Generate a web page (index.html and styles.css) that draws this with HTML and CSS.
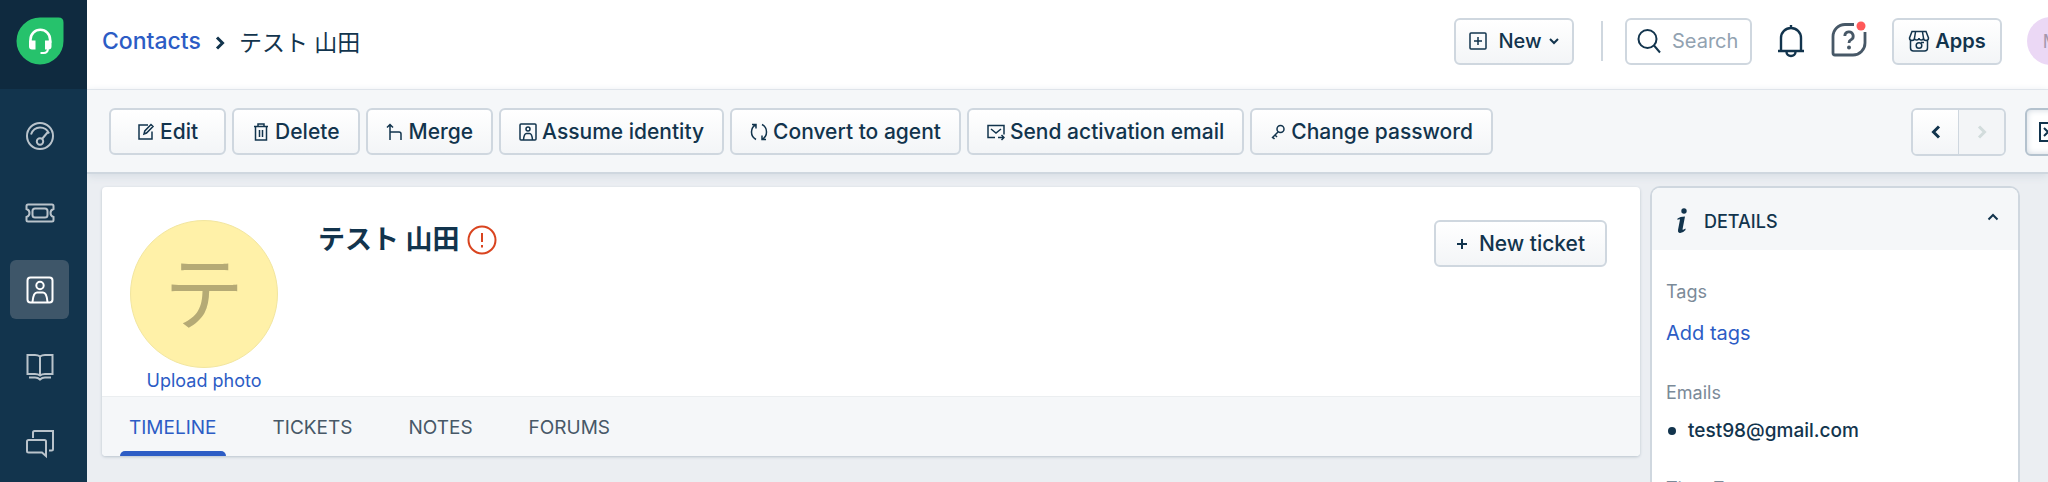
FILE: index.html
```html
<!DOCTYPE html>
<html lang="ja">
<head>
<meta charset="utf-8">
<title>Contacts</title>
<link rel="stylesheet" href="styles.css">
</head>
<body>
<div class="app">
  <nav class="sidebar" aria-label="Main">
    <a class="brand" href="#" aria-label="Home">
      <svg width="48" height="48" viewBox="0 0 48 48"><path d="M24 0.500H42.500Q47.500 0.500 47.500 5.500V24A23.500 23.500 0 1 1 24 0.500Z" fill="#26c26c"/><path d="M14.500 26V22.500a9.800 9.800 0 0 1 19.600 0V26" fill="none" stroke="#fff" stroke-width="2.600"/><path d="M13 23.500h6.500v9H16a3 3 0 0 1-3-3zM29 23.500h6.500v6a3 3 0 0 1-3 3H29z" fill="#fff"/><path d="M32 31q0 5-4.500 5H24.500" fill="none" stroke="#fff" stroke-width="2"/></svg>
    </a>
    <ul class="nav">
      <li><a class="nav-item" href="#" aria-label="Dashboard"><svg width="30" height="30" viewBox="0 0 30 30"><circle cx="15" cy="15" r="13"/><circle cx="15" cy="20.500" r="3.200"/><path d="M17 18l5.500-6.500M6 13.500q2.500-7 9-7t9 6"/></svg></a></li>
      <li><a class="nav-item" href="#" aria-label="Tickets"><svg width="30" height="30" viewBox="0 0 30 30"><path d="M3 6.500h24q1.500 0 1.500 1.500v3q-3 1-3 4t3 4v3q0 1.500-1.500 1.500H3q-1.500 0-1.500-1.500v-3q3-1 3-4t-3-4v-3q0-1.500 1.500-1.500z"/><rect x="7.500" y="10.500" width="15" height="9" rx="2.500"/></svg></a></li>
      <li><a class="nav-item active" href="#" aria-label="Contacts"><svg width="30" height="30" viewBox="0 0 30 30"><rect x="2.500" y="2.500" width="25" height="25" rx="3"/><circle cx="15" cy="10.500" r="3.700"/><path d="M7.500 27q.8-9.500 4.500-9.500h6q3.700 0 4.500 9.500"/></svg></a></li>
      <li><a class="nav-item" href="#" aria-label="Solutions"><svg width="30" height="30" viewBox="0 0 30 30"><path d="M15 4.500q-2-1.500-5-1.500H2.500v19H10q3 0 5 1.500 2-1.500 5-1.500h7.500V3H20q-3 0-5 1.500zM15 4.500v19M4 25.500h6q3 0 5 2 2-2 5-2h6"/></svg></a></li>
      <li><a class="nav-item" href="#" aria-label="Forums"><svg width="30" height="30" viewBox="0 0 30 30"><path d="M8 9V3.500Q8 2 9.500 2H28v18q0 1.500-1.500 1.500H24M2 12.500Q2 11 3.500 11h16q1.500 0 1.500 1.500V27l-4-3.500H3.500Q2 23.500 2 22z"/></svg></a></li>
    </ul>
  </nav>
  <div class="page">
    <header class="topbar">
      <nav class="crumbs" aria-label="Breadcrumb">
        <a class="crumb-link" href="#">Contacts</a>
        <svg class="crumb-arrow" width="10" height="14" viewBox="0 0 10 14"><path d="M2 1.500L7.500 7 2 12.500"/></svg>
        <span class="crumb-current">テスト 山田</span>
      </nav>
      <div class="top-actions">
        <button class="btn btn-new" type="button"><svg class="ico" width="18" height="18" viewBox="0 0 18 18"><rect x="1" y="1" width="16" height="16" rx="1"/><path d="M9 5v8M5 9h8"/></svg>New<svg class="caret" width="10" height="8" viewBox="0 0 10 8"><path d="M1 2l4 4 4-4"/></svg></button>
        <span class="divider"></span>
        <label class="search"><svg width="24" height="28" viewBox="0 0 24 28"><circle cx="10.500" cy="12" r="9"/><path d="M17 18.500l6 7"/></svg><input class="search-input" type="text" placeholder="Search" aria-label="Search"></label>
        <button class="icon-btn bell" type="button" aria-label="Notifications"><svg width="28" height="34" viewBox="0 0 28 34"><path d="M14 1v3M4 27V14a10 10 0 0 1 20 0v13M1 27h26M9.500 28a4.500 4 0 0 0 9 0"/></svg></button>
        <button class="icon-btn help" type="button" aria-label="Help"><svg width="38" height="36" viewBox="0 0 38 36"><path d="M24 3.500H15A12 12 0 0 0 3 15.500V32q0 2 2 2H23A12 12 0 0 0 35 22V11"/><path d="M14.800 15a4.200 4.200 0 1 1 6.200 3.800q-2 1-2 3.200"/><circle class="fill-dark" cx="19" cy="26.500" r="2"/><circle class="fill-red" cx="31" cy="5" r="4.500"/></svg></button>
        <button class="btn btn-apps" type="button"><svg class="ico" width="22" height="22" viewBox="0 0 22 22"><path d="M4 1.500h14l2.500 6.500q0 2.500-2.500 2.500T15.500 8q0 2-2.200 2T11 8q0 2-2.300 2T6.500 8q0 2.500-2.500 2.500T1.500 8zM2.500 10.500V18q0 3 3 3h11q3 0 3-3v-7.500M7.500 2l-1 6M14.500 2l1 6M13 12.500h3"/><circle cx="11" cy="15.500" r="2.800"/></svg>Apps</button>
        <span class="user">M</span>
      </div>
    </header>
    <div class="toolbar">
      <div class="tools">
        <button class="btn tool-edit" type="button"><svg class="ico" width="18" height="18" viewBox="0 0 18 18"><path d="M11 2H2v14h13V8.500M7 11l.8-3L14 1.500l2 2L9.500 10z"/></svg>Edit</button>
        <button class="btn" type="button"><svg class="ico" width="18" height="18" viewBox="0 0 18 18"><path d="M2 3.500h14M3.500 3.500V17h11V3.500M6 3.500V1h6v2.500M7.500 7v7M10.500 7v7"/></svg>Delete</button>
        <button class="btn" type="button"><svg class="ico" width="18" height="18" viewBox="0 0 18 18"><path d="M4 17V2M1 4.500L4 1.500l3 3M4 9h9q2 0 2 2v6"/></svg>Merge</button>
        <button class="btn" type="button"><svg class="ico" width="18" height="18" viewBox="0 0 18 18"><rect x="1" y="1" width="16" height="16" rx="1"/><circle cx="9" cy="6" r="2"/><path d="M4.500 17q.5-6.500 3-6.500h3q2.500 0 3 6.500"/></svg>Assume identity</button>
        <button class="btn" type="button"><svg class="ico" width="18" height="18" viewBox="0 0 18 18"><path d="M6 1.500Q1.500 4 1.500 9T6 16.500M2 1.500h4v4M12 1.500Q16.500 4 16.500 9T12 16.500M16 16.500h-4v-4"/></svg>Convert to agent</button>
        <button class="btn" type="button"><svg class="ico" width="18" height="18" viewBox="0 0 18 18"><path d="M8 14.500H1V2.500h16v9M4 6l5 4 5-4M11 14.500h6M14.500 12l2.500 2.500-2.500 2.500"/></svg>Send activation email</button>
        <button class="btn" type="button"><svg class="ico" width="16" height="18" viewBox="0 0 16 18"><circle cx="10.500" cy="6" r="3.500"/><path d="M8 9l-6 6M5 12l2 2M2.500 14l2 2"/></svg>Change password</button>
      </div>
      <div class="paging">
        <div class="pager">
          <button class="page-btn" type="button" aria-label="Previous"><svg width="10" height="14" viewBox="0 0 10 14"><path d="M8 1.500L2.500 7 8 12.500"/></svg></button>
          <button class="page-btn" type="button" aria-label="Next" disabled><svg width="10" height="14" viewBox="0 0 10 14"><path d="M2 1.500L7.500 7 2 12.500"/></svg></button>
        </div>
        <button class="panel-btn" type="button" aria-label="Toggle panel"><svg width="24" height="20" viewBox="0 0 24 20"><path d="M2 1h20v18H2zM6 6l4 4-4 4M14 1v18"/></svg></button>
      </div>
    </div>
    <div class="content">
      <main class="profile">
        <div class="profile-top">
          <div class="photo">
            <div class="avatar">テ</div>
            <a class="upload" href="#">Upload photo</a>
          </div>
          <h1 class="name">テスト 山田<svg width="30" height="30" viewBox="0 0 30 30"><circle cx="15" cy="15" r="13.500"/><path d="M15 8v9M15 20v2.500"/></svg></h1>
          <button class="btn btn-ticket" type="button"><svg class="ico" width="12" height="12" viewBox="0 0 12 12"><path d="M6 1v10M1 6h10"/></svg>New ticket</button>
        </div>
        <div class="tabs" role="tablist">
          <button class="tab selected" type="button" role="tab" aria-selected="true">TIMELINE</button>
          <button class="tab" type="button" role="tab">TICKETS</button>
          <button class="tab" type="button" role="tab">NOTES</button>
          <button class="tab" type="button" role="tab">FORUMS</button>
        </div>
      </main>
      <aside class="details">
        <button class="details-head" type="button" aria-expanded="true"><svg class="info" width="12" height="26" viewBox="0 0 12 26"><circle cx="8" cy="3" r="2.700"/><path d="M1.500 10.500Q4 8.500 9 8.500L6.500 21.500Q7.500 22 9.500 20.500V22Q6.500 25.500 3.500 25 1.500 24.500 2 22L4 11.500Q3 11 1.500 12z"/></svg><span class="details-title">DETAILS</span><svg class="fold" width="12" height="8" viewBox="0 0 12 8"><path d="M1.500 6.500L6 2l4.500 4.500"/></svg></button>
        <dl class="fields">
          <dt>Tags</dt>
          <dd><a class="add" href="#">Add tags</a></dd>
          <dt>Emails</dt>
          <dd class="email">test98@gmail.com</dd>
          <dt>Time Zone</dt>
        </dl>
      </aside>
    </div>
  </div>
</div>
</body>
</html>
```
FILE: styles.css
```css
* { box-sizing: border-box; }

body {
  margin: 0;
  font-family: Inter, "Noto Sans CJK JP", sans-serif;
  font-size: 20px;
  color: #12344d;
  background: #ebeef2;
  height: 100vh;
  overflow: hidden;
}

button, input { font: inherit; color: inherit; }
button { cursor: pointer; }
a { color: #2c5cc5; text-decoration: none; }
svg { flex: none; fill: none; stroke: currentColor; stroke-width: 2; }

.app { display: flex; height: 100%; overflow: hidden; }

/* Sidebar */
.sidebar { position: relative; z-index: 1; flex: none; width: 87px; background: #12344d; }
.brand { display: flex; height: 89px; padding: 17px 0 0 16px; background: #0f2a3f; }
.brand svg { stroke: none; }
.nav { list-style: none; margin: 0; padding: 17px 0 0 10px; }
.nav li { margin-bottom: 18px; }
.nav li:last-child { margin-bottom: 0; }
.nav-item { display: flex; align-items: center; justify-content: center; width: 59px; height: 59px; border-radius: 6px; color: #b9c3cb; }
.nav-item.active { background: #3e5669; color: #fff; }

.page { flex: 1; min-width: 0; display: flex; flex-direction: column; }

/* Top bar */
.topbar { flex: none; display: flex; justify-content: space-between; height: 90px; background: #fff; border-bottom: 1px solid #e3e8ee; }
.crumbs { display: flex; align-items: center; height: 82px; padding-left: 15px; font-size: 23px; white-space: nowrap; }
.crumb-link { font-weight: 500; }
.crumb-arrow { margin: 3px 14px 0; stroke-width: 3; }
.top-actions { display: flex; align-items: center; height: 82px; }

.btn {
  display: inline-flex;
  flex: none;
  align-items: center;
  justify-content: center;
  height: 47px;
  padding: 0 18px;
  border: 2px solid #cfd7df;
  border-radius: 6px;
  background: linear-gradient(#fff, #f3f5f7);
  font-size: 21px;
  font-weight: 500;
  white-space: nowrap;
}
.ico { margin-right: 5px; stroke-width: 1.5; }
.btn-new { width: 120px; padding: 0; font-size: 20px; }
.btn-new .ico { margin-right: 11px; }
.caret { margin-left: 7px; }
.divider { width: 2px; height: 40px; margin: 0 22px 0 27px; background: #cfd7df; }
.search { display: flex; align-items: center; width: 127px; height: 47px; padding-left: 10px; border: 2px solid #cfd7df; border-radius: 6px; }
.search-input { width: 80px; margin-left: 11px; padding: 0; border: 0; outline: 0; background: none; }
.search-input::placeholder { color: #92a2b1; opacity: 1; }
.icon-btn { display: flex; padding: 0; border: 0; background: none; }
.bell { margin-left: 25px; }
.bell svg { stroke-width: 2.4; }
.help { margin: 0 24px 4px 25px; color: #475867; }
.help svg { stroke-width: 2.8; }
.fill-dark { fill: #475867; stroke: none; }
.fill-red { fill: #ff5959; stroke: none; }
.btn-apps { width: 110px; padding: 0; font-size: 20px; font-weight: 600; }
.user { display: flex; align-items: center; justify-content: center; flex: none; width: 48px; height: 48px; margin: 0 -27px 0 25px; border-radius: 50%; background: #ebd8f5; color: #a597ac; font-size: 18px; }

/* Toolbar */
.toolbar {
  position: relative;
  flex: none;
  display: flex;
  justify-content: space-between;
  padding: 18px 0 16px 22px;
  background: #f5f7f9;
  border-bottom: 2px solid #cfd7df;
  box-shadow: 0 2px 8px #d5dce3;
}
.tools { display: flex; gap: 6px; }
.tool-edit { padding: 0 26px; }
.paging { display: flex; flex: none; margin-right: -26px; }
.pager { display: flex; width: 95px; height: 48px; margin-right: 19px; border: 2px solid #cfd7df; border-radius: 6px; overflow: hidden; }
.page-btn { flex: 1; display: flex; align-items: center; justify-content: center; padding: 0; border: 0; background: linear-gradient(#fff, #f3f5f7); }
.page-btn svg { stroke-width: 3; }
.page-btn:disabled { border-left: 1px solid #cfd7df; background: #f3f5f7; color: #d2dcdc; }
.panel-btn { display: flex; align-items: center; width: 49px; height: 48px; padding: 0 0 0 11px; border: 2px solid #b4c2ce; border-radius: 6px; background: #fff; box-shadow: inset 0 0 6px #cfd7df; }

/* Content */
.content { flex: 1; min-height: 0; display: flex; align-items: flex-start; gap: 10px; padding: 13px 28px 0 15px; }
.profile { flex: 1; min-width: 0; background: #fff; border-radius: 4px; box-shadow: 0 1px 3px #b9c3cd; }
.profile-top { display: flex; align-items: flex-start; height: 209px; padding: 33px 33px 0 28px; }
.photo { display: flex; flex-direction: column; align-items: center; }
.avatar { display: flex; align-items: center; justify-content: center; width: 148px; height: 148px; border: 1px solid #f2e6a0; border-radius: 50%; background: #fff1a8; color: #b5aa75; font-size: 80px; line-height: 1; }
.upload { font-size: 18px; line-height: 26px; }
.name { display: flex; flex: 1; align-items: center; gap: 8px; margin: 4px 0 0 40px; font-size: 27px; line-height: 32px; font-weight: 700; }
.name svg { color: #d9441f; }
.btn-ticket { width: 173px; padding: 0; }
.btn-ticket .ico { margin-right: 11px; stroke-width: 2; }
.tabs { display: flex; gap: 38px; height: 60px; padding-left: 18px; background: #f5f7f9; border-top: 1px solid #ebeef0; border-radius: 0 0 4px 4px; }
.tab { padding: 5px 9px 0; border: 0; border-bottom: 4px solid transparent; background: none; color: #475867; font-size: 19px; }
.tab.selected { color: #2c5cc5; position: relative; }
.tab.selected::after { content: ""; position: absolute; left: 0; right: 0; bottom: -4px; height: 5px; border-radius: 5px 5px 0 0; background: #2c5cc5; }

/* Details panel */
.details { flex: none; align-self: stretch; width: 370px; margin-top: -1px; border: 2px solid #cfd7df; border-bottom: 0; border-radius: 10px 10px 0 0; background: #fff; overflow: hidden; }
.details-head { display: flex; align-items: center; width: 100%; height: 62px; padding: 4px 19px 0 24px; border: 0; background: #f5f7f9; font-size: 18px; font-weight: 500; }
.info { fill: currentColor; stroke: none; }
.details-title { flex: 1; margin-left: 16px; text-align: left; }
.fold { margin-bottom: 8px; }
.fields { margin: 0; padding: 29px 14px 0; }
.fields dt { color: #7b8a98; font-size: 18px; line-height: 26px; }
.fields dd { margin: 0; line-height: 30px; padding: 13px 0 32px; }
.fields .email { display: flex; align-items: center; padding: 12px 0 32px; line-height: 26px; font-size: 19px; font-weight: 500; }
.email::before { content: ""; width: 8px; height: 8px; margin: 0 12px 0 2px; border-radius: 50%; background: currentColor; }
```
